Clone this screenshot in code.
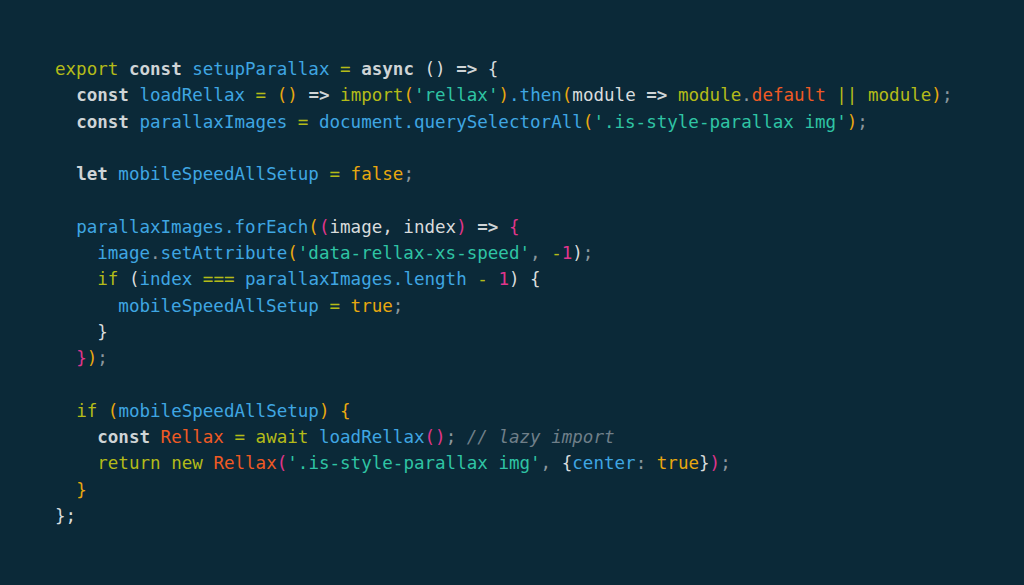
import React from "react";

type Tok = [string, string];

const K = "text-[#b4bb18]"; // yellow-green keyword
const B = "text-[#cfd4d6] font-bold"; // bold gray
const V = "text-[#3fa6e2]"; // blue
const O = "text-[#e8a80f]"; // orange
const R = "text-[#ef5a24]"; // red-orange
const S = "text-[#2fc4a4]"; // teal string
const P = "text-[#e0358c]"; // pink
const W = "text-[#d9dcdd]"; // white-gray
const G = "text-[#8b979e]"; // punctuation gray
const C = "text-[#6f7f89] italic"; // comment

const lines: Tok[][] = [
  [[K, "export"], [W, " "], [B, "const"], [W, " "], [V, "setupParallax"], [W, " "], [K, "="], [W, " "], [B, "async"], [W, " () "], [B, "=>"], [W, " {"]],
  [[W, "  "], [B, "const"], [W, " "], [V, "loadRellax"], [W, " "], [K, "="], [W, " "], [O, "()"], [W, " "], [B, "=>"], [W, " "], [K, "import"], [O, "("], [S, "'rellax'"], [O, ")"], [V, ".then"], [O, "("], [W, "module "], [B, "=>"], [W, " "], [K, "module"], [G, "."], [R, "default"], [W, " "], [K, "||"], [W, " "], [K, "module"], [O, ")"], [G, ";"]],
  [[W, "  "], [B, "const"], [W, " "], [V, "parallaxImages"], [W, " "], [K, "="], [W, " "], [V, "document.querySelectorAll"], [O, "("], [S, "'.is-style-parallax img'"], [O, ")"], [G, ";"]],
  [],
  [[W, "  "], [B, "let"], [W, " "], [V, "mobileSpeedAllSetup"], [W, " "], [K, "="], [W, " "], [O, "false"], [G, ";"]],
  [],
  [[W, "  "], [V, "parallaxImages.forEach"], [O, "("], [P, "("], [W, "image, index"], [P, ")"], [W, " "], [B, "=>"], [W, " "], [P, "{"]],
  [[W, "    "], [V, "image"], [G, "."], [V, "setAttribute"], [O, "("], [S, "'data-rellax-xs-speed'"], [G, ", "], [K, "-"], [P, "1"], [W, ")"], [G, ";"]],
  [[W, "    "], [K, "if"], [W, " ("], [V, "index"], [W, " "], [K, "==="], [W, " "], [V, "parallaxImages.length"], [W, " "], [K, "-"], [W, " "], [P, "1"], [W, ") {"]],
  [[W, "      "], [V, "mobileSpeedAllSetup"], [W, " "], [K, "="], [W, " "], [O, "true"], [G, ";"]],
  [[W, "    }"]],
  [[W, "  "], [P, "}"], [O, ")"], [G, ";"]],
  [],
  [[W, "  "], [K, "if"], [W, " "], [O, "("], [V, "mobileSpeedAllSetup"], [O, ")"], [W, " "], [O, "{"]],
  [[W, "    "], [B, "const"], [W, " "], [R, "Rellax"], [W, " "], [K, "="], [W, " "], [K, "await"], [W, " "], [V, "loadRellax"], [P, "()"], [G, ";"], [W, " "], [C, "// lazy import"]],
  [[W, "    "], [K, "return"], [W, " "], [K, "new"], [W, " "], [R, "Rellax"], [P, "("], [S, "'.is-style-parallax img'"], [G, ", "], [W, "{"], [V, "center"], [G, ": "], [O, "true"], [W, "}"], [P, ")"], [G, ";"]],
  [[W, "  "], [O, "}"]],
  [[W, "};"]],
];

export default function App() {
  return (
    <div className="w-[1024px] h-[585px] bg-[#0b2938] overflow-hidden">
      <div
        className="pt-[56px] pl-[55px] text-[17.55px] leading-[26.3px] whitespace-pre"
        style={{ fontFamily: '"DejaVu Sans Mono", monospace' }}
      >
        {lines.map((line, i) => (
          <div key={i} className="h-[26.3px]">
            {line.map(([cls, t], j) => (
              <span key={j} className={cls}>
                {t}
              </span>
            ))}
          </div>
        ))}
      </div>
    </div>
  );
}
